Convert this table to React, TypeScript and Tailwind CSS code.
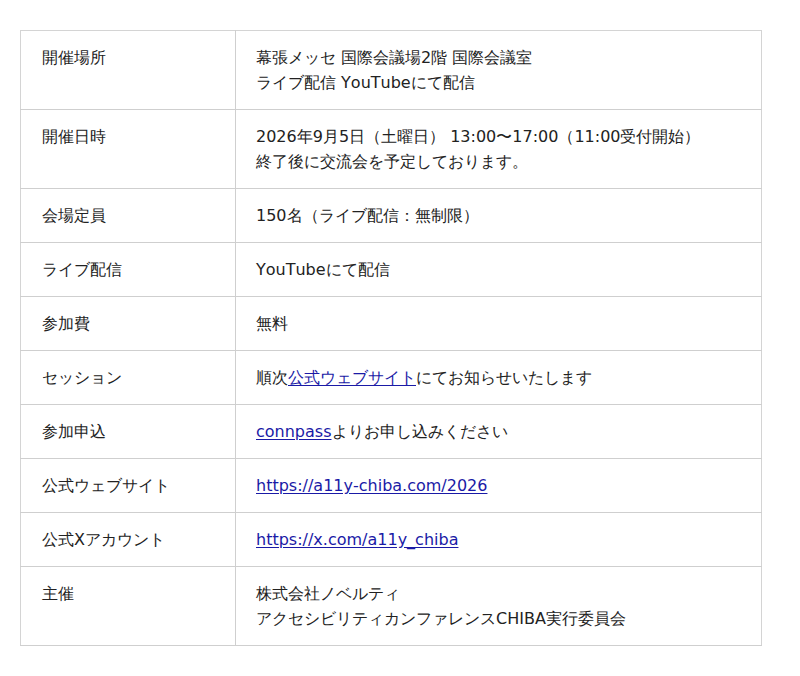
import React from 'react';

type Row = { label: string; value: React.ReactNode };

const Link: React.FC<{ href: string; children: React.ReactNode }> = ({ href, children }) => (
    <a href={href} className="text-[#1a1aa6] underline underline-offset-2">{children}</a>
);

const rows: Row[] = [
    {
        label: '開催場所',
        value: (
            <>
                幕張メッセ 国際会議場2階 国際会議室
                <br />
                ライブ配信 YouTubeにて配信
            </>
        ),
    },
    {
        label: '開催日時',
        value: (
            <>
                2026年9月5日（土曜日） 13:00〜17:00（11:00受付開始）
                <br />
                終了後に交流会を予定しております。
            </>
        ),
    },
    { label: '会場定員', value: '150名（ライブ配信：無制限）' },
    { label: 'ライブ配信', value: 'YouTubeにて配信' },
    { label: '参加費', value: '無料' },
    {
        label: 'セッション',
        value: (
            <>
                順次<Link href="#">公式ウェブサイト</Link>にてお知らせいたします
            </>
        ),
    },
    {
        label: '参加申込',
        value: (
            <>
                <Link href="#">connpass</Link>よりお申し込みください
            </>
        ),
    },
    { label: '公式ウェブサイト', value: <Link href="#">https://a11y-chiba.com/2026</Link> },
    { label: '公式Xアカウント', value: <Link href="#">https://x.com/a11y_chiba</Link> },
    {
        label: '主催',
        value: (
            <>
                株式会社ノベルティ
                <br />
                アクセシビリティカンファレンスCHIBA実行委員会
            </>
        ),
    },
];

const App: React.FC = () => {
    return (
        <div
            className="bg-white min-h-[676px] pt-[30px] pl-[20px] text-[16px] leading-[25px] text-[#222] [font-kerning:none]"
            style={{ fontFamily: '"DejaVu Sans", sans-serif' }}
        >
            <table className="w-[742px] border-collapse border border-[#d4d4d4]">
                <tbody>
                    {rows.map((row) => (
                        <tr key={row.label} className="border-b border-[#cfcfcf]">
                            <th
                                scope="row"
                                className="w-[215px] text-left font-normal align-top px-[21px] py-[14px] border-r border-[#cfcfcf]"
                            >
                                {row.label}
                            </th>
                            <td className="align-top px-[20px] py-[14px]">{row.value}</td>
                        </tr>
                    ))}
                </tbody>
            </table>
        </div>
    );
};

export default App;
